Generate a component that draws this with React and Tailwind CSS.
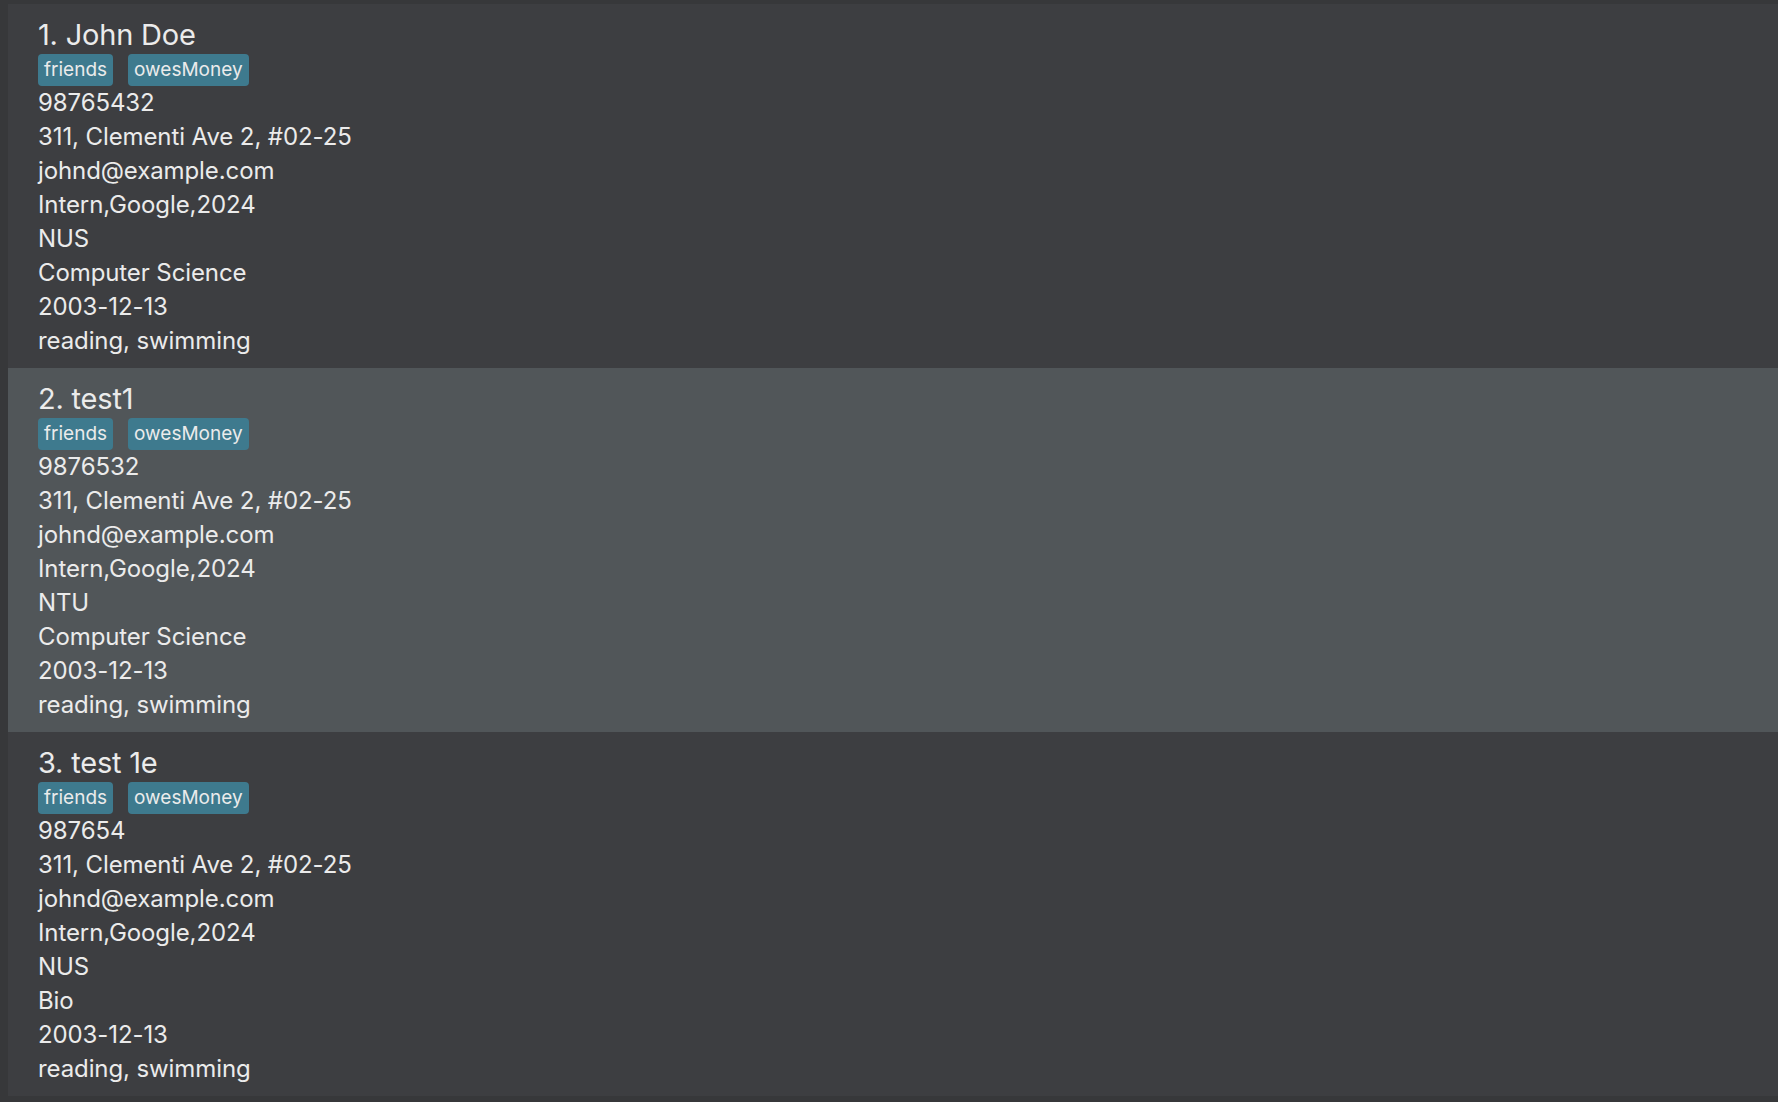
import React from "react";

const people = [
  {
    name: "1. John Doe",
    phone: "98765432",
    school: "NUS",
    major: "Computer Science",
    selected: false,
  },
  {
    name: "2. test1",
    phone: "9876532",
    school: "NTU",
    major: "Computer Science",
    selected: true,
  },
  {
    name: "3. test 1e",
    phone: "987654",
    school: "NUS",
    major: "Bio",
    selected: false,
  },
];

function Card({ p }) {
  const lines = [
    p.phone,
    "311, Clementi Ave 2, #02-25",
    "johnd@example.com",
    "Intern,Google,2024",
    p.school,
    p.major,
    "2003-12-13",
    "reading, swimming",
  ];
  return (
    <div
      className={
        "h-[364px] pl-[30px] pt-[14px] text-[#ebebeb] " +
        (p.selected ? "bg-[#515659]" : "bg-[#3d3e41]")
      }
    >
      <div className="text-[29px] leading-[34px] tracking-[-0.2px]">{p.name}</div>
      <div className="mt-[2px] flex gap-[15px]">
        <span className="h-[32px] rounded-[4px] bg-[#3e7a8e] px-[6px] text-[19px] leading-[32px]">
          friends
        </span>
        <span className="h-[32px] rounded-[4px] bg-[#3e7a8e] px-[6px] text-[19px] leading-[32px]">
          owesMoney
        </span>
      </div>
      <div className="text-[24px] leading-[34px] tracking-[-0.1px]">
        {lines.map((l, i) => (
          <div key={i}>{l}</div>
        ))}
      </div>
    </div>
  );
}

export default function App() {
  return (
    <div
      className="h-[1102px] w-[1778px] overflow-hidden bg-[#37383a] pl-[8px] pt-[4px]"
      style={{ fontFamily: "Inter, 'Noto Sans', sans-serif" }}
    >
      {people.map((p, i) => (
        <Card key={i} p={p} />
      ))}
    </div>
  );
}
